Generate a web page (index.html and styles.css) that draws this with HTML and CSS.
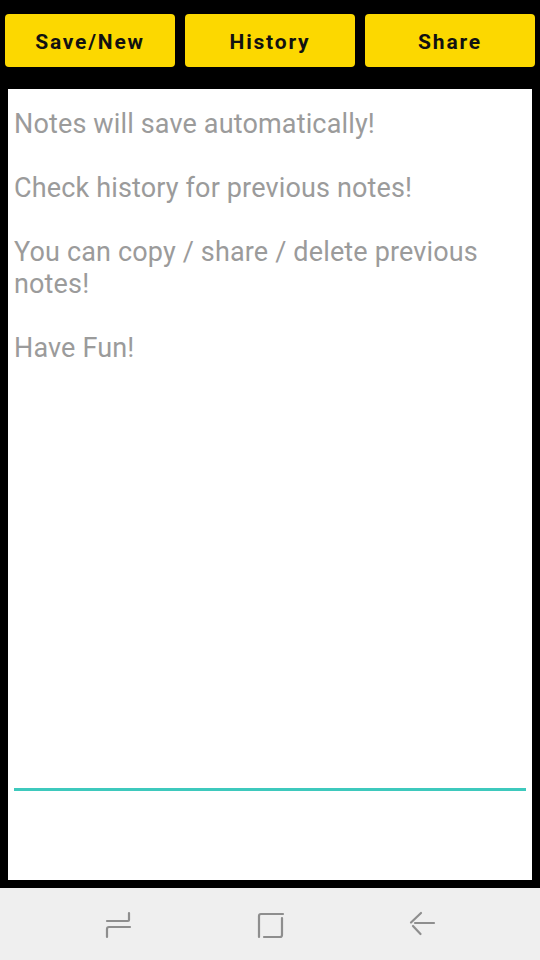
FILE: index.html
```html
<!DOCTYPE html>
<html>
<head>
<meta charset="utf-8">
<link rel="stylesheet" href="styles.css">
</head>
<body>
<div class="screen">
  <div class="toolbar">
    <button class="btn">Save/New</button>
    <button class="btn">History</button>
    <button class="btn">Share</button>
  </div>
  <div class="editor">
    <div class="notes">
      <p>Notes will save automatically!</p>
      <p>Check history for previous notes!</p>
      <p>You can copy / share / delete previous notes!</p>
      <p>Have Fun!</p>
    </div>
    <div class="underline"></div>
  </div>
  <div class="navbar">
    <svg class="nav-icon" viewBox="0 0 30 30" width="30" height="30">
      <path d="M26 3 V10 Q26 11 25 11 H4" />
      <path d="M27 17 H6 Q4 17 4 19 V27" />
    </svg>
    <svg class="nav-icon" viewBox="0 0 30 30" width="30" height="30">
      <path d="M4 27 V6 Q4 4 6 4 H28" />
      <path d="M27 8 V25 Q27 27 25 27 H9" />
    </svg>
    <svg class="nav-icon" viewBox="0 0 30 30" width="30" height="30">
      <path d="M14 3 L4 12.5" />
      <path d="M6 16 L13.5 24" />
      <path d="M8 13 H27" />
    </svg>
  </div>
</div>
</body>
</html>
```
FILE: styles.css
```css
* {
  box-sizing: border-box;
}
html, body {
  margin: 0;
  padding: 0;
  background: #000;
}
.screen {
  width: 540px;
  height: 960px;
  display: flex;
  flex-direction: column;
  background: #000;
  font-family: Roboto, "Liberation Sans", sans-serif;
}
.toolbar {
  display: flex;
  gap: 10px;
  padding: 14px 5px 0;
  flex-shrink: 0;
}
.btn {
  flex: 1;
  height: 53px;
  margin: 0;
  border: none;
  border-radius: 4px;
  background: #fcd800;
  color: #111;
  font-family: Roboto, "Liberation Sans", sans-serif;
  font-weight: 700;
  font-size: 21px;
  letter-spacing: 1.8px;
  padding: 3px 0 0;
}
.editor {
  flex: 1;
  margin: 22px 8px 8px;
  background: #fff;
  display: flex;
  flex-direction: column;
}
.notes {
  flex: 1;
  padding: 19px 14px 0 6px;
  color: #9b9b9b;
  font-size: 27px;
  line-height: 32px;
  letter-spacing: 0.15px;
}
.notes p {
  margin: 0 0 32px;
}
.underline {
  height: 3px;
  margin: 0 6px 89px;
  background: #3ec9bd;
}
.navbar {
  height: 72px;
  flex-shrink: 0;
  background: #efefef;
  display: flex;
  align-items: center;
  justify-content: space-between;
  padding: 2px 103px 0;
}
.nav-icon {
  fill: none;
  stroke: #8e8e8e;
  stroke-width: 2.2;
  stroke-linecap: round;
}
```
